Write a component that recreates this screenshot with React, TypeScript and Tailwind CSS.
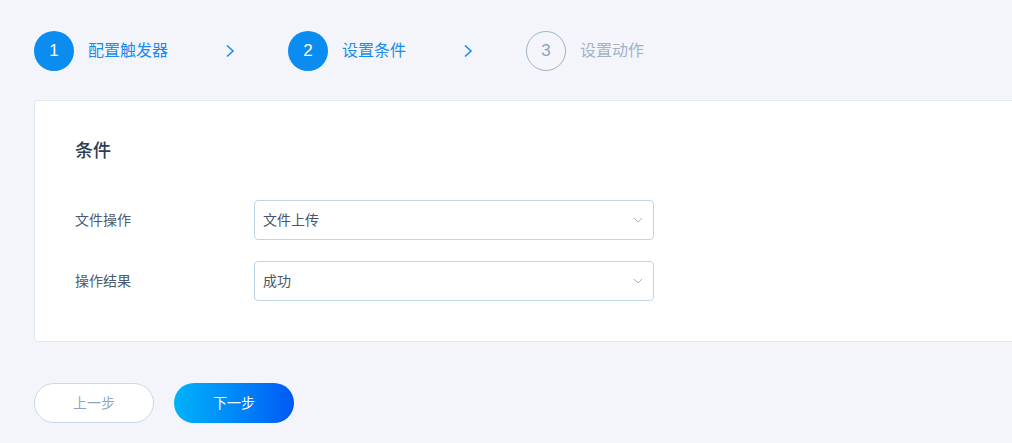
import React from 'react';

const FONT = { fontFamily: '"Liberation Sans", "Noto Sans CJK SC", sans-serif' };

type Step = { n: number; label: string; done: boolean };

const steps: Step[] = [
  { n: 1, label: '配置触发器', done: true },
  { n: 2, label: '设置条件', done: true },
  { n: 3, label: '设置动作', done: false },
];

function Chevron() {
  return (
    <svg width="10" height="14" viewBox="0 0 10 14" className="ml-[57px] mr-[53px]">
      <path d="M2 1.5 L8 7 L2 12.5" fill="none" stroke="#1a8cf0" strokeWidth="1.6" />
    </svg>
  );
}

function StepItem({ step }: { step: Step }) {
  return (
    <div className="flex items-center">
      {step.done ? (
        <div className="w-10 h-10 rounded-full bg-[#0a8cf0] text-white flex items-center justify-center text-[17px]">
          {step.n}
        </div>
      ) : (
        <div className="w-10 h-10 rounded-full border border-[#9db3c6] text-[#8ea3b8] flex items-center justify-center text-[17px]">
          {step.n}
        </div>
      )}
      <span className={`ml-[14px] text-[16px] ${step.done ? 'text-[#1a8cf0]' : 'text-[#a3b2c2]'}`}>
        {step.label}
      </span>
    </div>
  );
}

function SelectBox({ value }: { value: string }) {
  return (
    <div className="w-[400px] h-10 border border-[#bcd6e8] rounded flex items-center justify-between pl-2 pr-[10px]">
      <span className="text-sm text-[#4a5568]">{value}</span>
      <svg width="10" height="6" viewBox="0 0 10 6">
        <path d="M1 1 L5 5 L9 1" fill="none" stroke="#a9b4c0" strokeWidth="1" />
      </svg>
    </div>
  );
}

export default function App() {
  return (
    <div className="w-[1012px] h-[443px] bg-[#f3f5fa] overflow-hidden pl-[34px] pt-[31px]" style={FONT}>
      <div className="flex items-center h-10">
        <StepItem step={steps[0]} />
        <Chevron />
        <StepItem step={steps[1]} />
        <Chevron />
        <StepItem step={steps[2]} />
      </div>

      <div className="mt-[29px] w-[1000px] bg-white border border-[#e1e8f2] rounded pl-[40px] pt-[38px] pb-[40px]">
        <h2 className="text-[18px] leading-6 font-medium text-[#2c3e55]">条件</h2>
        <div className="mt-[37px] flex items-center">
          <span className="w-[179px] text-sm text-[#4a5a70]">文件操作</span>
          <SelectBox value="文件上传" />
        </div>
        <div className="mt-[21px] flex items-center">
          <span className="w-[179px] text-sm text-[#4a5a70]">操作结果</span>
          <SelectBox value="成功" />
        </div>
      </div>

      <div className="mt-[41px] flex gap-5">
        <button className="w-[120px] h-10 rounded-full bg-white border border-[#c9d9e7] text-sm text-[#8fa6bc]">
          上一步
        </button>
        <button className="w-[120px] h-10 rounded-full bg-gradient-to-r from-[#00b2f9] to-[#0058f5] text-sm text-white">
          下一步
        </button>
      </div>
    </div>
  );
}
